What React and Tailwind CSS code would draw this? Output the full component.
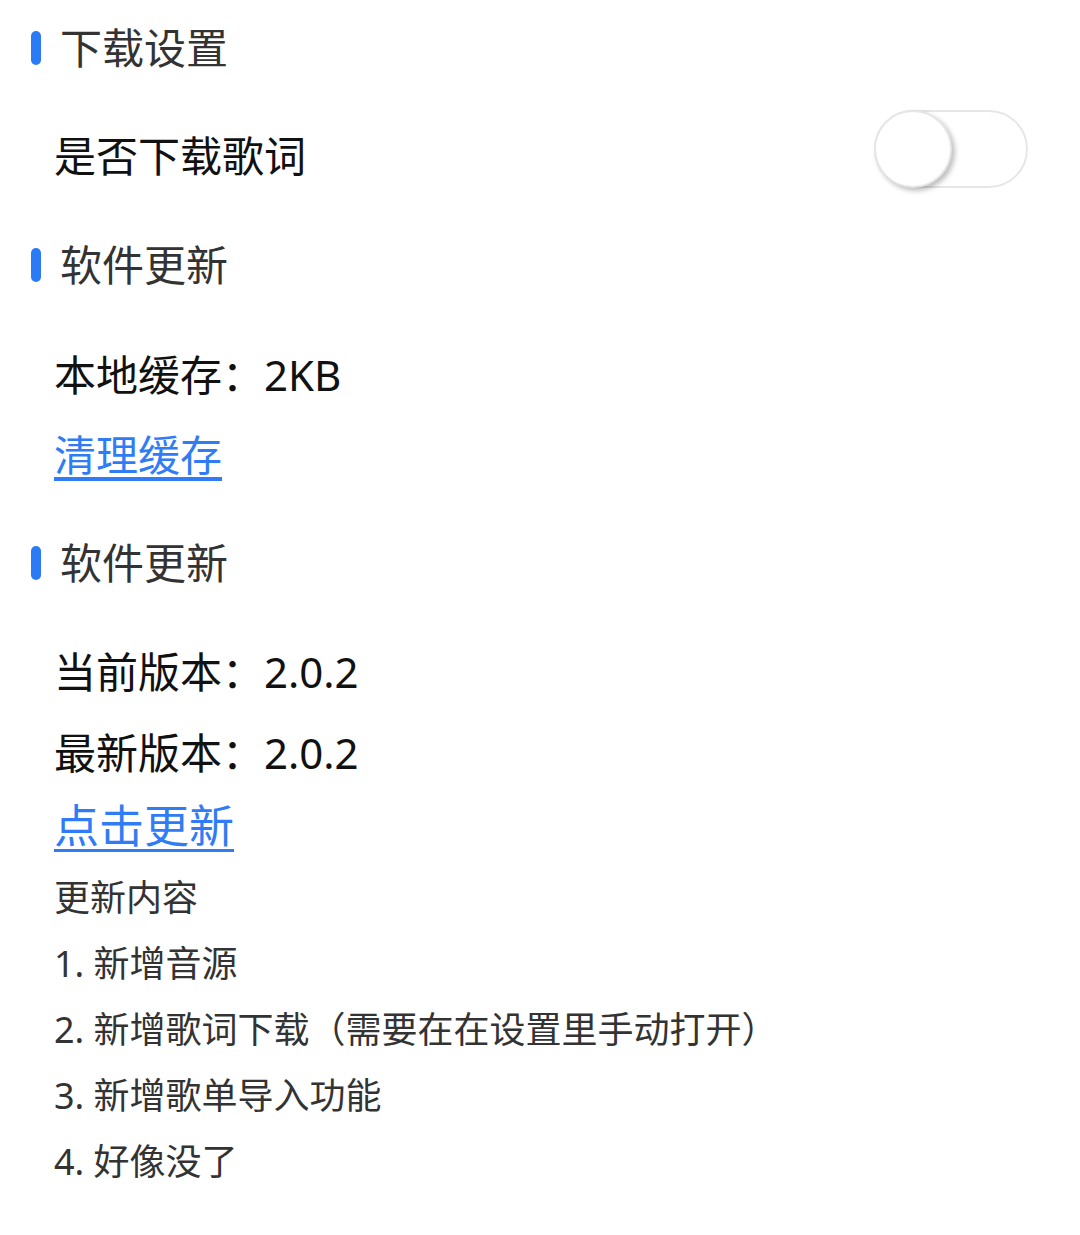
import React, { useState } from 'react';

// 设置页：下载设置 / 缓存 / 软件更新
const FONT = { fontFamily: '"Noto Sans", "Noto Sans CJK SC", sans-serif' };

const changelog = [
    '1. 新增音源',
    '2. 新增歌词下载（需要在在设置里手动打开）',
    '3. 新增歌单导入功能',
    '4. 好像没了',
];

function SectionTitle({ children, className = '' }) {
    return (
        <div className={`flex items-center pl-[31px] ${className}`}>
            <span className="w-[10px] h-[34px] rounded-full bg-[#2c7bf6]" />
            <span className="ml-[19px] text-[42px] leading-[56px] text-[#333]">{children}</span>
        </div>
    );
}

function Toggle({ on, onChange }) {
    return (
        <button
            onClick={() => onChange(!on)}
            className={`relative w-[154px] h-[78px] rounded-full border-2 ${on ? 'bg-[#2c7bf6] border-[#2c7bf6]' : 'bg-white border-[#e6e6e6]'}`}
        >
            <span
                className={`absolute top-[-2px] w-[78px] h-[78px] rounded-full bg-white border-2 border-[#e6e6e6] shadow-[3px_3px_5px_rgba(0,0,0,0.25)] ${on ? 'left-[74px]' : 'left-[-2px]'}`}
            />
        </button>
    );
}

export default function App() {
    const [lyrics, setLyrics] = useState(false);

    return (
        <div className="w-[1080px] h-[1235px] bg-white overflow-hidden" style={FONT}>
            <SectionTitle className="pt-[20px]">下载设置</SectionTitle>

            <div className="mt-[34px] flex items-center justify-between pl-[54px] pr-[52px]">
                <span className="text-[42px] leading-[56px] pt-[14px] text-[#111]">是否下载歌词</span>
                <Toggle on={lyrics} onChange={setLyrics} />
            </div>

            <SectionTitle className="mt-[49px]">软件更新</SectionTitle>

            <div className="pl-[54px]">
                <div className="mt-[54px] text-[42px] leading-[56px] text-[#111]">本地缓存：2KB</div>
                <a href="#" className="mt-[24px] block w-fit text-[42px] leading-[56px] text-[#2f7cf6] underline underline-offset-[6px]">
                    清理缓存
                </a>
            </div>

            <SectionTitle className="mt-[52px]">软件更新</SectionTitle>

            <div className="pl-[54px]">
                <div className="mt-[53px] text-[42px] leading-[56px] text-[#111]">当前版本：2.0.2</div>
                <div className="mt-[25px] text-[42px] leading-[56px] text-[#111]">最新版本：2.0.2</div>
                <a href="#" className="mt-[17px] block w-fit text-[45px] leading-[56px] text-[#2f7cf6] underline decoration-[3px] underline-offset-[6px]">
                    点击更新
                </a>
                <div className="mt-[11px] text-[36px] leading-[66px] text-[#333]">更新内容</div>
                {changelog.map((line) => (
                    <div key={line} className="text-[36px] leading-[66px] text-[#333]">{line}</div>
                ))}
            </div>
        </div>
    );
}
